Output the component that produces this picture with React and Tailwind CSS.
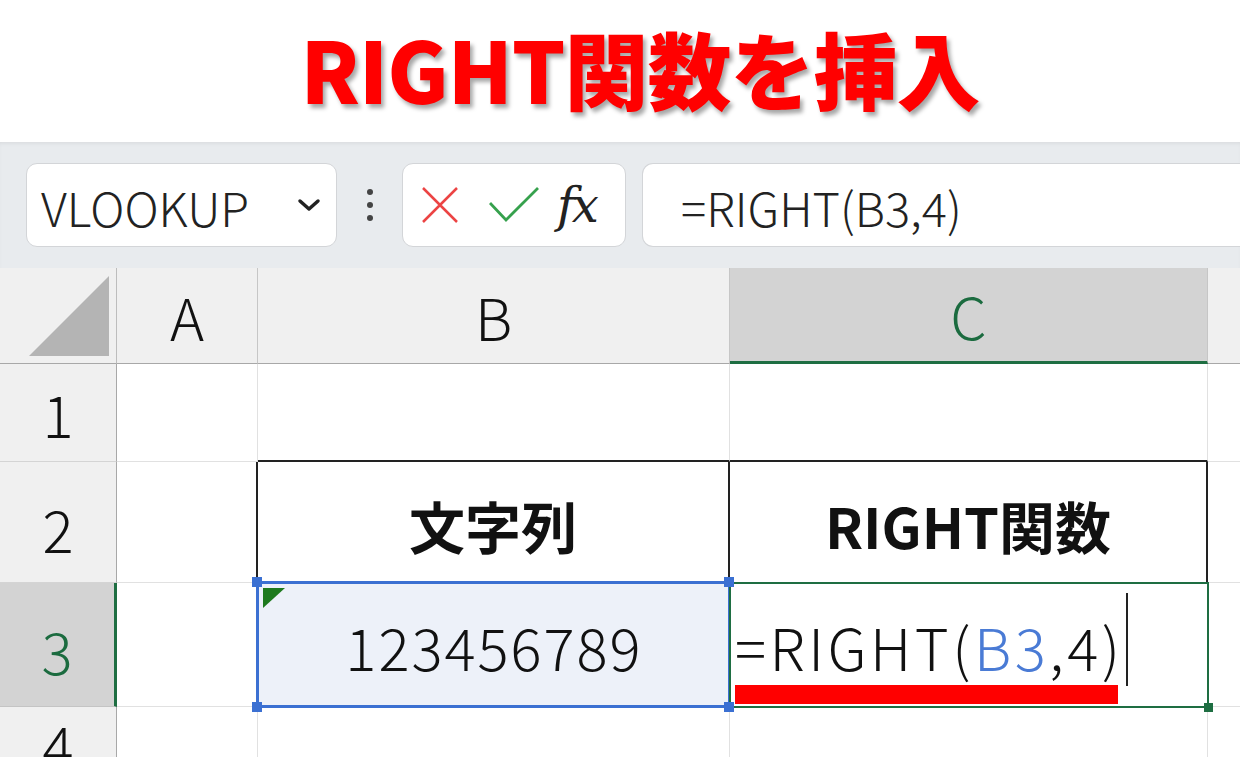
import React from 'react';

const jp = "font-['Noto_Sans_CJK_JP',sans-serif]";
const grid = 'border-[#e1e1e1]';

const Handle = ({ className }) => (
  <div className={`absolute w-[10px] h-[10px] bg-[#3b70d2] ${className}`} />
);

const ToolBar = () => (
  <div className="shrink-0 h-[126px] bg-[#e8ebee] flex items-center pl-[26px] shadow-[inset_0_3px_4px_-2px_rgba(0,0,0,0.08)]">
    <div className="w-[311px] h-[84px] bg-white border border-[#d3d5d8] rounded-[11px] flex items-center justify-between pl-[14px] pr-[14px]">
      <span className="text-[47px] font-light text-[#222] leading-none pt-[2px]">VLOOKUP</span>
      <svg width="26" height="18" viewBox="0 0 26 18" fill="none">
        <path d="M4 5 L13 13 L22 5" stroke="#222" strokeWidth="3.5" strokeLinecap="round" strokeLinejoin="round" />
      </svg>
    </div>
    <div className="w-[65px] flex flex-col items-center gap-[7px]">
      <div className="w-[6px] h-[6px] rounded-full bg-[#444]" />
      <div className="w-[6px] h-[6px] rounded-full bg-[#444]" />
      <div className="w-[6px] h-[6px] rounded-full bg-[#444]" />
    </div>
    <div className="w-[224px] h-[84px] bg-white border border-[#d3d5d8] rounded-[11px] flex items-center pl-[18px] gap-[30px]">
      <svg width="38" height="38" viewBox="0 0 38 38">
        <path d="M2 2 L36 36 M36 2 L2 36" stroke="#ec4444" strokeWidth="2.5" />
      </svg>
      <svg width="50" height="36" viewBox="0 0 50 36">
        <path d="M1 16 L17 33 L49 1" stroke="#36a14d" strokeWidth="2.8" fill="none" />
      </svg>
      <span className="font-['DejaVu_Serif',serif] italic text-[48px] leading-none text-[#222] -ml-[12px] tracking-[-3px]">fx</span>
    </div>
    <div className="flex-1 ml-[16px] h-[84px] bg-white border border-r-0 border-[#d3d5d8] rounded-l-[11px] flex items-center pl-[38px]">
      <span className="text-[47px] font-light text-[#222] leading-none pt-[2px]">=RIGHT(B3,4)</span>
    </div>
  </div>
);

export default function App() {
  return (
    <div className={`w-[1240px] h-[757px] overflow-hidden bg-white flex flex-col ${jp}`}>
      <div className="shrink-0 h-[142px] flex items-center justify-center pl-[40px] pb-[6px]">
        <h1 className="text-[84px] font-black text-[#ff0000] leading-none tracking-[-1px] [text-shadow:3px_4px_4px_rgba(0,0,0,0.35)]">
          RIGHT関数を挿入
        </h1>
      </div>
      <ToolBar />
      <div className="shrink-0 h-[489px] overflow-hidden grid grid-cols-[117px_141px_472px_478px_1fr] grid-rows-[96px_98px_121px_124px_50px] text-[58px] font-light text-[#111] leading-none">
        {/* header row */}
        <div className="bg-[#f0f0f0] border-r border-b border-r-[#bdbdbd] border-b-[#a8a8a8] flex items-end justify-end pr-[7px] pb-[7px]">
          <div className="w-[80px] h-[80px] bg-[#b4b4b4] [clip-path:polygon(100%_0,100%_100%,0_100%)]" />
        </div>
        <div className="bg-[#f0f0f0] border-r border-b border-r-[#c6c6c6] border-b-[#a8a8a8] flex items-center justify-center">A</div>
        <div className="bg-[#f0f0f0] border-r border-b border-r-[#c6c6c6] border-b-[#a8a8a8] flex items-center justify-center">B</div>
        <div className="bg-[#d3d3d3] border-r border-b-[3px] border-r-[#c6c6c6] border-b-[#1e6e42] flex items-center justify-center text-[#1b6b3f]">C</div>
        <div className="bg-[#f0f0f0] border-b border-b-[#a8a8a8]" />

        {/* row 1 */}
        <div className="bg-[#f0f0f0] border-r border-b border-r-[#a8a8a8] border-b-[#d4d4d4] flex items-center justify-center">1</div>
        <div className={`border-r border-b ${grid}`} />
        <div className="border-r border-b-2 border-r-[#e1e1e1] border-b-[#222]" />
        <div className="border-r border-b-2 border-r-[#e1e1e1] border-b-[#222]" />
        <div className={`border-b ${grid}`} />

        {/* row 2 */}
        <div className="bg-[#f0f0f0] border-r border-b border-r-[#a8a8a8] border-b-[#d4d4d4] flex items-center justify-center pt-[12px]">2</div>
        <div className="border-r-2 border-b border-r-[#222] border-b-[#e1e1e1]" />
        <div className="border-r-2 border-r-[#222] flex items-center justify-center font-bold text-[56px] pt-[4px]">文字列</div>
        <div className="border-r-2 border-r-[#222] flex items-center justify-center font-bold text-[56px] pt-[4px]">RIGHT関数</div>
        <div className={`border-b ${grid}`} />

        {/* row 3 */}
        <div className="bg-[#d3d3d3] border-r-[3px] border-b border-r-[#1e6e42] border-b-[#c4c4c4] flex items-center justify-center text-[#1b6b3f] pt-[10px]">3</div>
        <div className={`border-r border-b ${grid}`} />
        <div className="relative bg-[#edf1f9] flex items-center justify-center tracking-[2px] pt-[2px]">
          123456789
          <div className="absolute -left-[2px] -top-[2px] -right-[1px] -bottom-[1px] border-[3px] border-[#3b70d2]" />
          <div className="absolute left-[5px] top-[5px] w-[22px] h-[20px] bg-[#1e7a1e] [clip-path:polygon(0_0,100%_0,0_100%)]" />
          <Handle className="-left-[6px] -top-[6px]" />
          <Handle className="-left-[6px] -bottom-[5px]" />
        </div>
        <div className="relative flex items-center pl-[5px] pt-[2px]">
          <span className="tracking-[3.5px]">=RIGHT(<span className="text-[#4a7bd5]">B3</span>,4)</span>
          <span className="ml-[2px] w-[2px] h-[93px] bg-[#222] -mt-[14px]" />
          <div className="absolute -left-[1px] -top-[1px] -right-[1px] -bottom-[1px] border-2 border-[#1e6e42]" />
          <div className="absolute left-[5px] bottom-[3px] w-[383px] h-[19px] bg-[#ff0000]" />
          <Handle className="-left-[6px] -top-[6px]" />
          <Handle className="-left-[6px] -bottom-[5px]" />
          <div className="absolute -right-[5px] -bottom-[5px] w-[9px] h-[9px] bg-[#1e6e42]" />
        </div>
        <div className={`border-b ${grid}`} />

        {/* row 4 */}
        <div className="bg-[#f0f0f0] border-r border-r-[#a8a8a8] flex items-start justify-center pt-[8px] overflow-hidden">4</div>
        <div className={`border-r ${grid}`} />
        <div className={`border-r ${grid}`} />
        <div className={`border-r ${grid}`} />
        <div />
      </div>
    </div>
  );
}
